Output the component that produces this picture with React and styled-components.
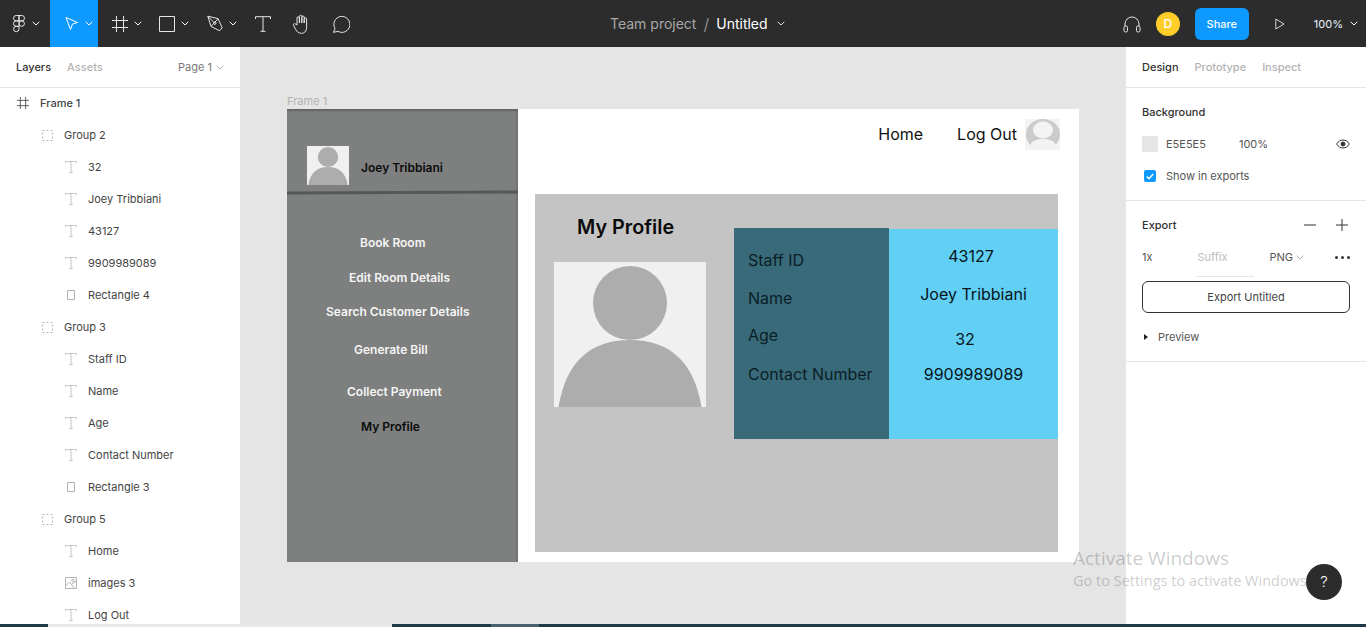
import styled, { createGlobalStyle } from "styled-components"

const GlobalStyle = createGlobalStyle`
  html, body {
    margin: 0;
    padding: 0;
    height: 100%;
    overflow: hidden;
    background: #fff;
    font-family: Inter, "Liberation Sans", sans-serif;
  }
  * { box-sizing: border-box; }
`

const Page = styled.div`
  position: relative;
  width: 1366px;
  height: 627px;
  display: flex;
  flex-direction: column;
  overflow: hidden;
`

/* top toolbar */
const TopBar = styled.header`
  height: 47px;
  flex: none;
  display: flex;
  align-items: center;
  background: #2c2c2c;
  color: #fff;
`
const Tools = styled.div`
  display: flex;
  height: 100%;
`
const Tool = styled.div`
  width: ${p => p.$w || 48}px;
  height: 47px;
  display: flex;
  align-items: center;
  padding-left: ${p => p.$pad || 13}px;
  gap: ${p => p.$gap || 6}px;
  background: ${p => (p.$active ? "#0d99ff" : "transparent")};
`
const Crumbs = styled.div`
  margin-left: 250px;
  display: flex;
  align-items: center;
  font-size: 14px;
  color: #a8a8a8;
`
const Slash = styled.span`
  margin: 0 7px;
  font-size: 16px;
  color: #8a8a8a;
`
const FileName = styled.span`
  color: #fff;
  margin-right: 9px;
`
const TopRight = styled.div`
  margin-left: auto;
  display: flex;
  align-items: center;
`
const Avatar = styled.div`
  width: 24px;
  height: 24px;
  margin-left: 15px;
  border-radius: 50%;
  background: #ffcd29;
  color: #fff;
  font-size: 12px;
  font-weight: 500;
  display: flex;
  align-items: center;
  justify-content: center;
`
const ShareButton = styled.div`
  width: 54px;
  height: 32px;
  margin-left: 15px;
  margin-right: 26px;
  border-radius: 6px;
  background: #0d99ff;
  font-size: 11px;
  font-weight: 500;
  display: flex;
  align-items: center;
  justify-content: center;
`
const Zoom = styled.div`
  margin-left: 29px;
  margin-right: 8px;
  display: flex;
  align-items: center;
  gap: 7px;
  font-size: 11px;
  color: #e8f4ff;
`

/* panels */
const Main = styled.div`
  flex: 1;
  min-height: 0;
  display: flex;
`
const SidePanel = styled.aside`
  width: 240px;
  flex: none;
  background: #fff;
  color: #333;
  font-size: 11px;
  overflow: hidden;
`
const PanelTabs = styled.div`
  height: 41px;
  display: flex;
  align-items: center;
  padding: 0 16px;
  gap: 16px;
  border-bottom: 1px solid #e5e5e5;
`
const Tab = styled.span`
  font-weight: 500;
  color: ${p => (p.$on ? "#333" : "#b3b3b3")};
`
const PageSelect = styled.span`
  margin-left: auto;
  display: flex;
  align-items: center;
  gap: 4px;
  color: #777;
`
const LayerList = styled.div`
  margin-top: -1px;
`
const LayerRow = styled.div`
  height: 32px;
  display: flex;
  align-items: center;
  padding-left: ${p => p.$indent}px;
  gap: 10px;
  font-weight: ${p => (p.$bold ? 500 : 400)};
  color: #444;
`
const LayerIcon = styled.span`
  width: 14px;
  height: 14px;
  flex: none;
  display: flex;
  align-items: center;
  justify-content: center;
`

/* canvas and the design frame */
const Canvas = styled.main`
  flex: 1;
  background: #e5e5e5;
  padding: 47px 0 0 47px;
`
const FrameLabel = styled.div`
  height: 15px;
  line-height: 14px;
  font-size: 11px;
  color: #b2b2b2;
`
const Frame = styled.div`
  width: 792px;
  height: 453px;
  display: flex;
  background: #fff;
`
const Sidebar = styled.div`
  width: 231px;
  flex: none;
  background: #7e807f;
  box-shadow: inset 0 3px 2px -1px #626463, inset -2px 0 3px -1px #6a6c6b;
`
const Profile = styled.div`
  height: 82px;
  padding: 37px 0 0 20px;
  display: flex;
  align-items: flex-start;
  gap: 12px;
`
const ProfileName = styled.div`
  margin-top: 14px;
  font-size: 12px;
  line-height: 15px;
  font-weight: 600;
  color: #0c0c0c;
`
const Divider = styled.div`
  height: 3px;
  background: #565856;
  transform: rotate(-0.2deg);
`
const Menu = styled.div`
  padding-top: 41px;
`
const MenuItem = styled.div`
  height: 16px;
  line-height: 16px;
  margin-top: ${p => p.$gap}px;
  padding-left: ${p => p.$x}px;
  font-size: 12px;
  font-weight: 600;
  color: ${p => (p.$current ? "#0c0c0c" : "#f5f5f5")};
`
const Content = styled.div`
  flex: 1;
  display: flex;
  flex-direction: column;
`
const Nav = styled.div`
  height: 85px;
  padding: 10px 19px 0 0;
  display: flex;
  justify-content: flex-end;
  align-items: flex-start;
  font-size: 16px;
  color: #111;
`
const NavLink = styled.span`
  margin-right: ${p => p.$gap}px;
  line-height: 31px;
`
const Card = styled.div`
  height: 358px;
  margin: 0 21px 0 17px;
  padding-left: 19px;
  background: #c4c4c4;
  display: flex;
  align-items: flex-start;
`
const PhotoColumn = styled.div`
  width: 152px;
  margin-right: 28px;
`
const CardTitle = styled.h1`
  margin: 20px 0 22px 23px;
  font-size: 19.8px;
  line-height: 26px;
  font-weight: 600;
  color: #0a0a0a;
`
const InfoTable = styled.div`
  flex: 1;
  margin-top: 34px;
  display: flex;
  align-items: flex-start;
`
const LabelCol = styled.div`
  width: 155px;
  height: 211px;
  padding: 21px 0 0 14px;
  background: #386a7a;
`
const ValueCol = styled.div`
  flex: 1;
  height: 210px;
  margin-top: 1px;
  padding-top: 16px;
  background: #62cff4;
`
const Label = styled.div`
  height: 22px;
  line-height: 22px;
  margin-top: ${p => p.$gap || 0}px;
  font-size: 16px;
  color: #0b1e25;
`
const Value = styled.div`
  height: 22px;
  line-height: 22px;
  margin-top: ${p => p.$gap || 0}px;
  padding-right: ${p => p.$nudge || 0}px;
  font-size: 16px;
  text-align: center;
  color: #06141a;
`

/* right panel */
const Section = styled.div`
  padding: ${p => p.$pad};
  height: ${p => p.$h}px;
  border-bottom: 1px solid #e5e5e5;
`
const SectionTitle = styled.div`
  display: flex;
  align-items: center;
  justify-content: space-between;
  font-weight: 500;
  color: #333;
  height: 14px;
  line-height: 14px;
`
const FillRow = styled.div`
  margin-top: 17px;
  height: 16px;
  display: flex;
  align-items: center;
  color: #555;
`
const Swatch = styled.div`
  width: 16px;
  height: 16px;
  margin-right: 8px;
  background: #e5e5e5;
`
const Percent = styled.span`
  margin-left: 33px;
`
const EyeWrap = styled.span`
  margin-left: auto;
  display: flex;
`
const CheckRow = styled.div`
  margin-top: 16px;
  height: 16px;
  padding-left: 2px;
  display: flex;
  align-items: center;
  gap: 10px;
  color: #555;
`
const CheckBox = styled.div`
  width: 12px;
  height: 12px;
  border-radius: 2px;
  background: #0d99ff;
  display: flex;
  align-items: center;
  justify-content: center;
`
const ExportActions = styled.span`
  display: flex;
  gap: 20px;
  margin-right: 2px;
`
const ExportRow = styled.div`
  margin-top: 18px;
  height: 28px;
  display: flex;
  align-items: flex-start;
  color: #555;
`
const Suffix = styled.div`
  width: 58px;
  height: 27px;
  margin-left: 44px;
  padding-left: 1px;
  border-bottom: 1px solid #e5e5e5;
  color: #bdbdbd;
  line-height: 14px;
`
const Format = styled.div`
  margin-left: 15px;
  display: flex;
  align-items: center;
  gap: 3px;
  line-height: 14px;
  height: 14px;
`
const Dots = styled.span`
  margin-left: auto;
  margin-top: 6px;
  display: flex;
  gap: 3px;
`
const Dot = styled.i`
  width: 3px;
  height: 3px;
  border-radius: 50%;
  background: #333;
`
const ExportButton = styled.div`
  height: 32px;
  margin-top: 3px;
  border: 1px solid #333;
  border-radius: 6px;
  display: flex;
  align-items: center;
  justify-content: center;
  color: #444;
`
const PreviewRow = styled.div`
  margin-top: 17px;
  height: 14px;
  display: flex;
  align-items: center;
  gap: 10px;
  color: #555;
`
const Caret = styled.i`
  width: 0;
  height: 0;
  margin-left: 2px;
  border-left: 4px solid #222;
  border-top: 3px solid transparent;
  border-bottom: 3px solid transparent;
`

/* bottom strip */
const BottomStrip = styled.div`
  height: 3px;
  flex: none;
  display: flex;
  background: #1f3a45;
`
const Thumb = styled.div`
  width: ${p => p.$w}px;
  margin-left: ${p => p.$x}px;
  background: ${p => p.$c};
`

/* things lying over the page */
const Watermark = styled.div`
  position: absolute;
  left: 1073px;
  top: 546px;
  font-family: "Open Sans", sans-serif;
  color: rgba(60, 60, 60, 0.27);
  pointer-events: none;
`
const WatermarkTitle = styled.div`
  font-size: 19px;
  line-height: 25px;
`
const WatermarkText = styled.div`
  font-size: 14.5px;
  line-height: 19px;
  white-space: nowrap;
`
const HelpButton = styled.div`
  position: absolute;
  left: 1306px;
  top: 564px;
  width: 36px;
  height: 36px;
  padding-bottom: 2px;
  border-radius: 50%;
  background: #2c2c2c;
  color: #fff;
  font-size: 15px;
  font-weight: 300;
  display: flex;
  align-items: center;
  justify-content: center;
`

const Chevron = ({ color = "#fff" }) => (
  <svg width="8" height="5" viewBox="0 0 8 5" fill="none">
    <path d="M.7.8 4 4l3.3-3.2" stroke={color} strokeWidth="1" />
  </svg>
)

const Stroke = ({ w, h, children, color = "#fff", sw = 1 }) => (
  <svg width={w} height={h} viewBox={`0 0 ${w} ${h}`} fill="none" stroke={color} strokeWidth={sw}>
    {children}
  </svg>
)

const FigmaLogo = () => (
  <Stroke w={12} h={18} color="#e6e6e6">
    <path d="M6 .5H3.2a2.7 2.7 0 0 0 0 5.4H6zM6 .5h2.8a2.7 2.7 0 0 1 0 5.4H6zM6 5.9H3.2a2.7 2.7 0 0 0 0 5.4H6z" />
    <circle cx="8.7" cy="8.6" r="2.7" />
    <path d="M6 11.3H3.2a2.7 2.7 0 1 0 2.8 2.7z" />
  </Stroke>
)
const HashIcon = ({ size = 16, color = "#e6e6e6" }) => (
  <svg width={size} height={size} viewBox="0 0 16 16" fill="none" stroke={color}>
    <path d="M0 4.5h16M0 11.5h16M4.5 0v16M11.5 0v16" />
  </svg>
)
const TextIcon = ({ size = 16, color = "#e6e6e6" }) => (
  <svg width={size} height={size} viewBox="0 0 16 16" fill="none" stroke={color}>
    <path d="M.5 3V.7h15V3M8 .7v14.6M5.5 15.3h5" />
  </svg>
)

const PersonPhoto = ({ w, h }) => (
  <svg width={w} height={h} viewBox="0 0 152 145" preserveAspectRatio="none">
    <rect width="152" height="145" fill="#f0f0f0" />
    <circle cx="76" cy="41" r="37" fill="#adadad" />
    <path d="M4.500 145C12 100 36 78 76 78s64 22 71.500 67z" fill="#adadad" />
  </svg>
)

const NavAvatar = () => (
  <svg width="35" height="31" viewBox="0 0 35 31">
    <rect width="35" height="31" fill="#f3f3f3" />
    <ellipse cx="18" cy="15.500" rx="17" ry="15.500" fill="#cbcbcb" />
    <ellipse cx="18" cy="11" rx="10" ry="8.500" fill="#f3f3f3" />
    <path d="M5 27c1-5 6-7 13-7s12 2 13 7c-3 2.500-8 4-13 4s-10-1.500-13-4z" fill="#f3f3f3" />
  </svg>
)

const layers = [
  { name: "Frame 1", indent: 16, kind: "frame", bold: true },
  { name: "Group 2", indent: 40, kind: "group" },
  { name: "32", indent: 64, kind: "text" },
  { name: "Joey Tribbiani", indent: 64, kind: "text" },
  { name: "43127", indent: 64, kind: "text" },
  { name: "9909989089", indent: 64, kind: "text" },
  { name: "Rectangle 4", indent: 64, kind: "rect" },
  { name: "Group 3", indent: 40, kind: "group" },
  { name: "Staff ID", indent: 64, kind: "text" },
  { name: "Name", indent: 64, kind: "text" },
  { name: "Age", indent: 64, kind: "text" },
  { name: "Contact Number", indent: 64, kind: "text" },
  { name: "Rectangle 3", indent: 64, kind: "rect" },
  { name: "Group 5", indent: 40, kind: "group" },
  { name: "Home", indent: 64, kind: "text" },
  { name: "images 3", indent: 64, kind: "image" },
  { name: "Log Out", indent: 64, kind: "text" },
]

const LayerGlyph = ({ kind }) => {
  if (kind === "frame") return <HashIcon size={12} color="#333" />
  if (kind === "text") return <TextIcon size={12} color="#b3b3b3" />
  if (kind === "group") {
    return (
      <Stroke w={11} h={11} color="#b3b3b3">
        <path d="M.5 .5h10v10H.5z" strokeDasharray="2 2" />
      </Stroke>
    )
  }
  if (kind === "rect") {
    return (
      <Stroke w={8} h={10} color="#b3b3b3">
        <path d="M.5.5h7v9h-7z" />
      </Stroke>
    )
  }
  return (
    <Stroke w={12} h={12} color="#b3b3b3">
      <path d="M.5.5h11v11H.5zM.5 9l4-4 5 6M7 7l4.500-3" />
      <circle cx="8" cy="3.500" r="1.300" />
    </Stroke>
  )
}

const menuItems = [
  { label: "Book Room", x: 73, gap: 0 },
  { label: "Edit Room Details", x: 62, gap: 19 },
  { label: "Search Customer Details", x: 39, gap: 18 },
  { label: "Generate Bill", x: 67, gap: 22 },
  { label: "Collect Payment", x: 60, gap: 26 },
  { label: "My Profile", x: 74, gap: 19, current: true },
]

const App = () => {
  return (
    <Page>
      <GlobalStyle />
      <TopBar>
        <Tools>
          <Tool $w={50} $pad={13} $gap={7}>
            <FigmaLogo />
            <Chevron />
          </Tool>
          <Tool $active $pad={15}>
            <Stroke w={14} h={15} color="#fff">
              <path d="M1 1.500 12.500 6.500 7.500 8 5.500 13.500z" />
            </Stroke>
            <Chevron />
          </Tool>
          <Tool $pad={14}>
            <HashIcon />
            <Chevron />
          </Tool>
          <Tool $pad={13}>
            <Stroke w={16} h={16} color="#e6e6e6">
              <path d="M.5.5h15v15H.5z" />
            </Stroke>
            <Chevron />
          </Tool>
          <Tool $pad={13}>
            <Stroke w={16} h={17} color="#e6e6e6">
              <path d="M.8 1.200 11 3.600l4.200 9.200-2.600 2.900L4 11.500zM1 1.500l5.500 5.500M11 3.800 4.300 11" />
              <circle cx="7.800" cy="8.200" r="1.200" />
            </Stroke>
            <Chevron />
          </Tool>
          <Tool $w={40} $pad={13}>
            <TextIcon />
          </Tool>
          <Tool $w={40} $pad={11}>
            <Stroke w={18} h={20} color="#e6e6e6">
              <path d="M4 11V4a1.200 1.200 0 0 1 2.400 0v5V2.500a1.200 1.200 0 0 1 2.400 0V9 3.200a1.200 1.200 0 0 1 2.400 0V9 5a1.200 1.200 0 0 1 2.400 0v8.500c0 3.500-2 5.800-5.200 5.800-3 0-4.500-1.500-5.800-4L.6 11.500c-.8-1.500 1-2.500 2-1.300z" />
            </Stroke>
          </Tool>
          <Tool $w={38} $pad={10}>
            <Stroke w={18} h={18} color="#e6e6e6">
              <path d="M1.500 17.300 3 13.500A8 8 0 1 1 6 16.400z" />
            </Stroke>
          </Tool>
        </Tools>
        <Crumbs>
          Team project
          <Slash>/</Slash>
          <FileName>Untitled</FileName>
          <Chevron color="#ddd" />
        </Crumbs>
        <TopRight>
          <Stroke w={18} h={18} color="#e6e6e6">
            <path d="M2 11V9a7 7 0 0 1 14 0v2" />
            <rect x="1" y="11" width="3.500" height="6" rx="1.500" />
            <rect x="13.500" y="11" width="3.500" height="6" rx="1.500" />
          </Stroke>
          <Avatar>D</Avatar>
          <ShareButton>Share</ShareButton>
          <Stroke w={10} h={12} color="#d8d8d8">
            <path d="M.8 1v10L9 6z" />
          </Stroke>
          <Zoom>
            100%
            <Chevron />
          </Zoom>
        </TopRight>
      </TopBar>

      <Main>
        <SidePanel>
          <PanelTabs>
            <Tab $on>Layers</Tab>
            <Tab>Assets</Tab>
            <PageSelect>
              Page 1
              <Chevron color="#aaa" />
            </PageSelect>
          </PanelTabs>
          <LayerList>
            {layers.map(l => (
              <LayerRow key={l.name} $indent={l.indent} $bold={l.bold}>
                <LayerIcon>
                  <LayerGlyph kind={l.kind} />
                </LayerIcon>
                {l.name}
              </LayerRow>
            ))}
          </LayerList>
        </SidePanel>

        <Canvas>
          <FrameLabel>Frame 1</FrameLabel>
          <Frame>
            <Sidebar>
              <Profile>
                <PersonPhoto w={42} h={39} />
                <ProfileName>Joey Tribbiani</ProfileName>
              </Profile>
              <Divider />
              <Menu>
                {menuItems.map(m => (
                  <MenuItem key={m.label} $x={m.x} $gap={m.gap} $current={m.current}>
                    {m.label}
                  </MenuItem>
                ))}
              </Menu>
            </Sidebar>
            <Content>
              <Nav>
                <NavLink $gap={34}>Home</NavLink>
                <NavLink $gap={8}>Log Out</NavLink>
                <NavAvatar />
              </Nav>
              <Card>
                <PhotoColumn>
                  <CardTitle>My Profile</CardTitle>
                  <PersonPhoto w={152} h={145} />
                </PhotoColumn>
                <InfoTable>
                  <LabelCol>
                    <Label>Staff ID</Label>
                    <Label $gap={16}>Name</Label>
                    <Label $gap={15}>Age</Label>
                    <Label $gap={17}>Contact Number</Label>
                  </LabelCol>
                  <ValueCol>
                    <Value $nudge={5}>43127</Value>
                    <Value $gap={16}>Joey Tribbiani</Value>
                    <Value $gap={23} $nudge={17}>32</Value>
                    <Value $gap={13}>9909989089</Value>
                  </ValueCol>
                </InfoTable>
              </Card>
            </Content>
          </Frame>
        </Canvas>

        <SidePanel>
          <PanelTabs>
            <Tab $on>Design</Tab>
            <Tab>Prototype</Tab>
            <Tab>Inspect</Tab>
          </PanelTabs>
          <Section $h={113} $pad="17px 16px 0">
            <SectionTitle>Background</SectionTitle>
            <FillRow>
              <Swatch />
              E5E5E5
              <Percent>100%</Percent>
              <EyeWrap>
                <Stroke w={14} h={10} color="#333">
                  <path d="M.7 5C2.200 2.300 4.400 1 7 1s4.800 1.300 6.300 4C11.800 7.700 9.600 9 7 9S2.200 7.700.7 5z" />
                  <circle cx="7" cy="5" r="2" fill="#333" />
                </Stroke>
              </EyeWrap>
            </FillRow>
            <CheckRow>
              <CheckBox>
                <Stroke w={8} h={7} sw={1.500}>
                  <path d="M.8 3.500 3 5.700 7.200 1" />
                </Stroke>
              </CheckBox>
              Show in exports
            </CheckRow>
          </Section>
          <Section $h={161} $pad="17px 16px 0">
            <SectionTitle>
              Export
              <ExportActions>
                <Stroke w={12} h={12} color="#333">
                  <path d="M0 6h12" />
                </Stroke>
                <Stroke w={12} h={12} color="#333">
                  <path d="M0 6h12M6 0v12" />
                </Stroke>
              </ExportActions>
            </SectionTitle>
            <ExportRow>
              1x
              <Suffix>Suffix</Suffix>
              <Format>
                PNG
                <Chevron color="#aaa" />
              </Format>
              <Dots>
                <Dot />
                <Dot />
                <Dot />
              </Dots>
            </ExportRow>
            <ExportButton>Export Untitled</ExportButton>
            <PreviewRow>
              <Caret />
              Preview
            </PreviewRow>
          </Section>
        </SidePanel>
      </Main>

      <BottomStrip>
        <Thumb $x={48} $w={344} $c="#e8e8e8" />
        <Thumb $x={99} $w={48} $c="#4c626b" />
      </BottomStrip>

      <Watermark>
        <WatermarkTitle>Activate Windows</WatermarkTitle>
        <WatermarkText>Go to Settings to activate Windows.</WatermarkText>
      </Watermark>
      <HelpButton>?</HelpButton>
    </Page>
  )
}

export default App
